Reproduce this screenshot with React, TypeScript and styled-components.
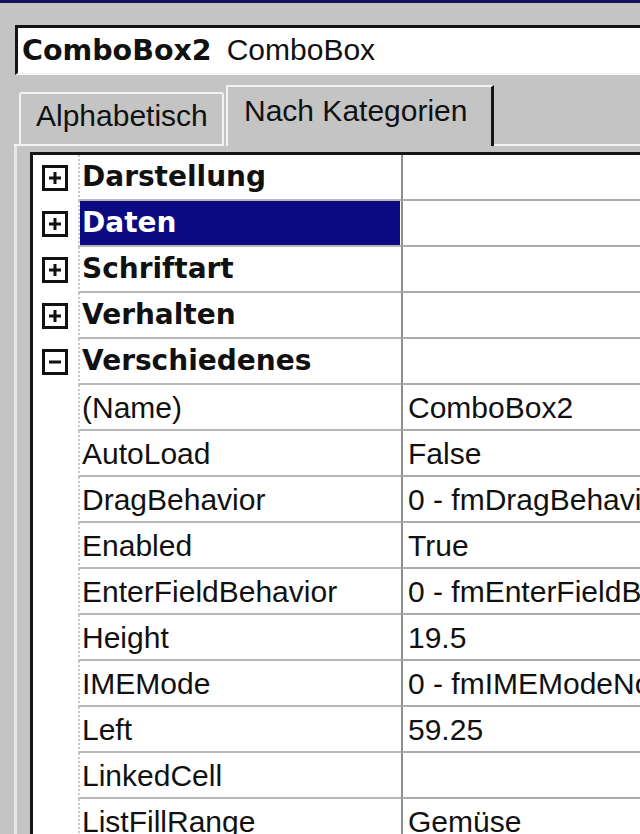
import React from "react";
import styled, { createGlobalStyle } from "styled-components";

const Global = createGlobalStyle`
  html, body { margin: 0; padding: 0; }
  body {
    width: 640px;
    height: 834px;
    overflow: hidden;
    background: #c4c4c4;
    font-family: "Liberation Sans", Arial, sans-serif;
    color: #111;
  }
`;

const Window = styled.div`
  width: 640px;
  height: 834px;
  overflow: hidden;
  display: flex;
  flex-direction: column;
`;

const TitleEdge = styled.div`
  height: 3px;
  background: #12125e;
  flex: none;
`;

const ComboWrap = styled.div`
  padding: 22px 0 0 15px;
  flex: none;
`;

const Combo = styled.div`
  height: 43px;
  border-top: 3px solid #141414;
  border-left: 3px solid #141414;
  border-bottom: 2px solid #f4f4f4;
  background: #fff;
  padding: 2px 0 0 4px;
  box-sizing: content-box;
  white-space: nowrap;
  line-height: 40px;
  font-size: 30px;
`;

const ComboName = styled.span`
  font-family: "DejaVu Sans", sans-serif;
  font-weight: bold;
  font-size: 28.5px;
`;

const ComboType = styled.span`
  margin-left: 15px;
`;

const TabStrip = styled.div`
  display: flex;
  align-items: flex-end;
  padding-left: 14px;
  margin-top: 8px;
  height: 63px;
  flex: none;
`;

const TabLead = styled.div`
  width: 5px;
  height: 0;
  border-bottom: 2px solid #f2f2f2;
`;

const Tab = styled.div<{ $active?: boolean }>`
  box-sizing: border-box;
  font-size: 30px;
  white-space: nowrap;
  border-top: 2px solid #f2f2f2;
  border-left: 2px solid #f2f2f2;
  ${(p) =>
    p.$active
      ? `
    width: 268px;
    height: 61px;
    margin-left: 2px;
    border-right: 3px solid #141414;
    padding: 7px 0 0 16px;
    line-height: 34px;
  `
      : `
    width: 205px;
    height: 54px;
    border-right: 2px solid #f2f2f2;
    border-bottom: 2px solid #f2f2f2;
    border-top-left-radius: 3px;
    border-top-right-radius: 3px;
    padding: 5px 0 0 15px;
    line-height: 34px;
  `}
`;

const TabFill = styled.div`
  flex: 1;
  height: 0;
  border-bottom: 2px solid #f2f2f2;
`;

const Panel = styled.div`
  flex: 1;
  margin-left: 14px;
  border-left: 3px solid #e6e6e6;
  padding: 6px 0 0 13px;
  min-height: 0;
`;

const Grid = styled.div`
  height: 100%;
  border-top: 3px solid #161616;
  border-left: 3px solid #161616;
  background: #fff;
  overflow: hidden;
`;

const Row = styled.div`
  display: grid;
  grid-template-columns: 45px 323px 1fr;
  height: 46px;
`;

const Gutter = styled.div`
  display: flex;
  align-items: center;
  justify-content: center;
  padding-right: 2px;
`;

const NameCell = styled.div`
  border-left: 2px dotted #c8c8c8;
  border-bottom: 2px solid #b8b8b8;
  padding-right: 1px;
  min-width: 0;
`;

const Label = styled.div<{ $category?: boolean; $selected?: boolean }>`
  height: 44px;
  box-sizing: border-box;
  padding: ${(p) => (p.$category ? "3px" : "4px")} 0 0 2px;
  line-height: 38px;
  white-space: nowrap;
  overflow: hidden;
  font-size: ${(p) => (p.$category ? "28px" : "30px")};
  font-family: ${(p) =>
    p.$category ? `"DejaVu Sans", sans-serif` : `"Liberation Sans", Arial, sans-serif`};
  font-weight: ${(p) => (p.$category ? "bold" : "normal")};
  background: ${(p) => (p.$selected ? "#0c0a80" : "transparent")};
  color: ${(p) => (p.$selected ? "#fff" : "#111")};
`;

const ValueCell = styled.div`
  border-left: 2px solid #8e8e8e;
  border-bottom: 2px solid #acacac;
  padding: 4px 0 0 5px;
  line-height: 38px;
  font-size: 30px;
  white-space: nowrap;
  overflow: hidden;
`;

const Expander = ({ open }: { open: boolean }) => (
  <svg width="26" height="26" viewBox="0 0 26 26">
    <rect x="1.5" y="1.5" width="23" height="23" fill="#fff" stroke="#111" strokeWidth="3" />
    <rect x="7" y="11.5" width="12" height="3" fill="#111" />
    {!open && <rect x="11.5" y="7" width="3" height="12" fill="#111" />}
  </svg>
);

const categories = [
  { name: "Darstellung" },
  { name: "Daten", selected: true },
  { name: "Schriftart" },
  { name: "Verhalten" },
  { name: "Verschiedenes", open: true },
];

const props: [string, string][] = [
  ["(Name)", "ComboBox2"],
  ["AutoLoad", "False"],
  ["DragBehavior", "0 - fmDragBehaviorDisabled"],
  ["Enabled", "True"],
  ["EnterFieldBehavior", "0 - fmEnterFieldBehaviorSelectAll"],
  ["Height", "19.5"],
  ["IMEMode", "0 - fmIMEModeNoControl"],
  ["Left", "59.25"],
  ["LinkedCell", ""],
  ["ListFillRange", "Gemüse"],
  ["ListRows", "8"],
];

export default function App() {
  return (
    <Window>
      <Global />
      <TitleEdge />
      <ComboWrap>
        <Combo>
          <ComboName>ComboBox2</ComboName>
          <ComboType>ComboBox</ComboType>
        </Combo>
      </ComboWrap>
      <TabStrip>
        <TabLead />
        <Tab>Alphabetisch</Tab>
        <Tab $active>Nach Kategorien</Tab>
        <TabFill />
      </TabStrip>
      <Panel>
        <Grid>
          {categories.map((c) => (
            <Row key={c.name}>
              <Gutter>
                <Expander open={!!c.open} />
              </Gutter>
              <NameCell>
                <Label $category $selected={c.selected}>
                  {c.name}
                </Label>
              </NameCell>
              <ValueCell />
            </Row>
          ))}
          {props.map(([n, v]) => (
            <Row key={n}>
              <Gutter />
              <NameCell>
                <Label>{n}</Label>
              </NameCell>
              <ValueCell>{v}</ValueCell>
            </Row>
          ))}
        </Grid>
      </Panel>
    </Window>
  );
}
